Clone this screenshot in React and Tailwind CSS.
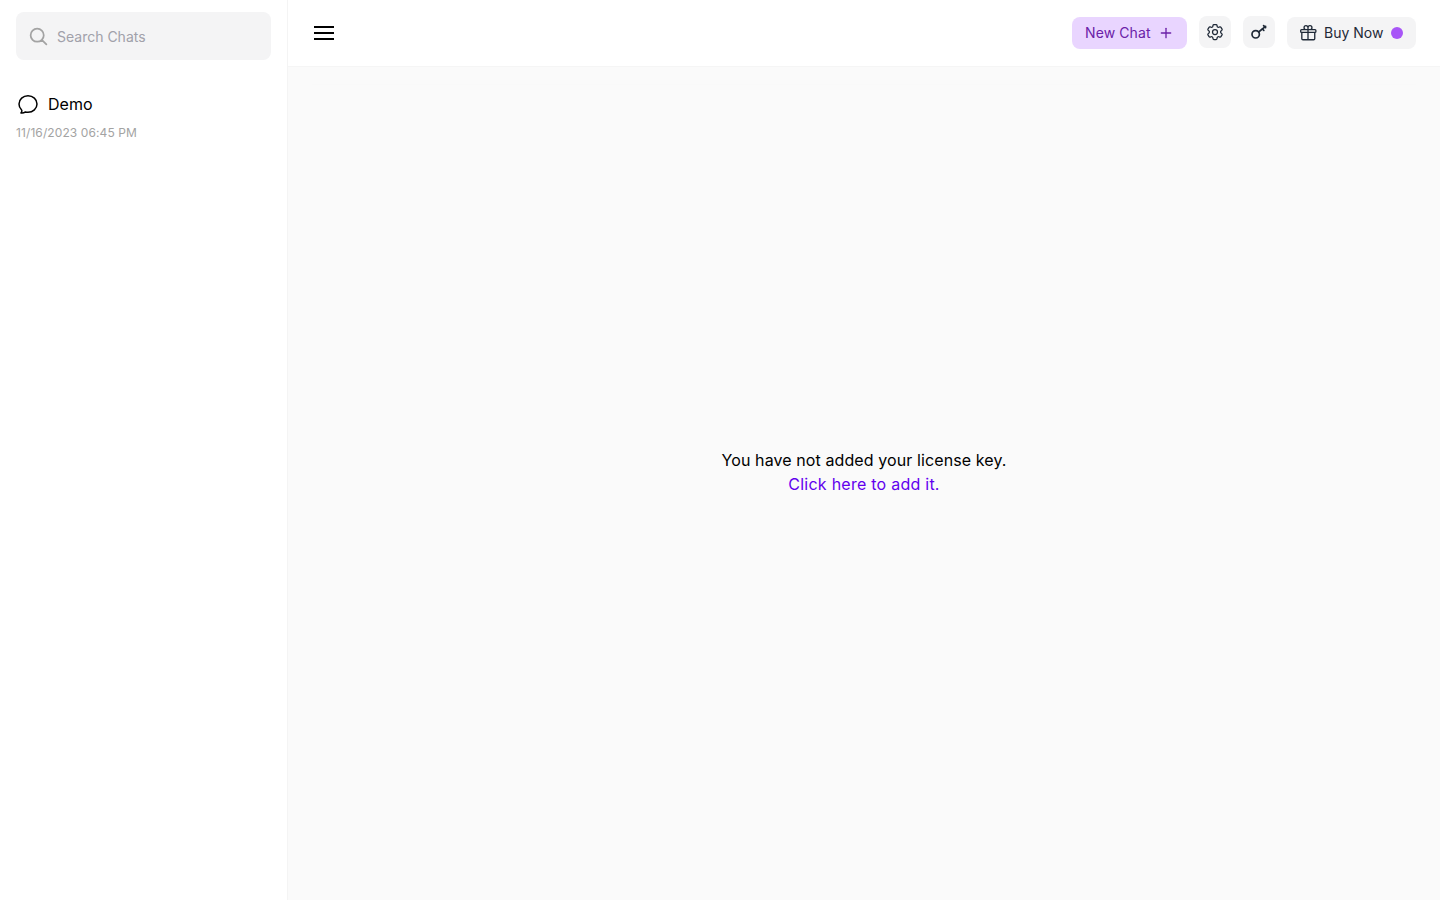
import React from 'react';
import { Plus } from 'lucide-react';

// heroicons-style outlines, the lucide versions have different strokes
const Outline = ({ size = 20, width = 1.5, className = '', children }) => (
  <svg width={size} height={size} viewBox="0 0 24 24" fill="none" stroke="currentColor" strokeWidth={width} strokeLinecap="round" strokeLinejoin="round" className={className}>
    {children}
  </svg>
);

const KeyIcon = () => (
  <svg width="18" height="18" viewBox="0 0 18 18" fill="none" stroke="currentColor" strokeWidth="1.7" strokeLinecap="round" strokeLinejoin="round">
    <circle cx="5.7" cy="11.3" r="3.7" />
    <path d="M8.6 9L15.6 3.4" />
    <path d="M12.4 6l1.4 1.3" />
    <path d="M13.6 2.6l2 2" />
  </svg>
);

const App = () => {
  return (
    <div className="flex h-screen w-full bg-white text-black font-['Inter',sans-serif]">
      {/* sidebar */}
      <aside className="w-[288px] shrink-0 border-r border-[#f4f4f4] px-4 pt-3">
        <div className="flex h-12 items-center rounded-lg bg-[#f4f4f5] pl-3 pr-3">
          <Outline size={21} width={2} className="text-[#a3a3a3] shrink-0">
            <path d="m21 21-5.197-5.197m0 0A7.5 7.5 0 1 0 5.196 5.196a7.5 7.5 0 0 0 10.607 10.607Z" />
          </Outline>
          <span className="ml-2 text-sm text-[#a1a1aa] pt-0.5">Search Chats</span>
        </div>
        <div className="mt-8">
          <div className="flex items-center h-6">
            <Outline size={24} className="shrink-0 mr-2 text-black">
              <path d="M12 20.25c4.97 0 9-3.694 9-8.25s-4.03-8.25-9-8.25S3 7.444 3 12c0 2.104.859 4.023 2.273 5.48.432.447.74 1.04.586 1.641a4.483 4.483 0 0 1-.923 1.785A5.969 5.969 0 0 0 6 21c1.282 0 2.47-.402 3.445-1.087.81.22 1.668.337 2.555.337Z" />
            </Outline>
            <span className="text-base">Demo</span>
          </div>
          <div className="mt-[9px] text-xs leading-4 tracking-[0.1px] text-[#a3a3a3]">11/16/2023 06:45 PM</div>
        </div>
      </aside>

      {/* main */}
      <main className="flex flex-1 flex-col bg-[#fafafa]">
        <header className="flex h-[67px] shrink-0 items-center border-b border-[#f5f5f5] bg-white px-6">
          <svg width="24" height="24" viewBox="0 0 24 24" fill="none" stroke="black" strokeWidth="2" className="shrink-0">
            <path d="M2 6h20M2 12h20M2 18h20" />
          </svg>
          <div className="ml-auto flex items-center">
            <div className="flex h-8 w-[115px] items-center rounded-lg bg-[#e9d5ff] pl-[13px] text-sm text-[#6b21a8] tracking-[0.1px]">
              New Chat
              <Plus size={16} strokeWidth={2} className="ml-[7px]" />
            </div>
            <div className="ml-3 mb-0.5 flex h-8 w-8 items-center justify-center rounded-lg bg-[#f4f4f5] text-[#1f2937]">
              <Outline size={20}>
                <path d="M9.594 3.94c.09-.542.56-.94 1.11-.94h2.593c.55 0 1.02.398 1.11.94l.213 1.281c.063.374.313.686.645.87.074.04.147.083.22.127.325.196.72.257 1.075.124l1.217-.456a1.125 1.125 0 0 1 1.37.49l1.296 2.247a1.125 1.125 0 0 1-.26 1.431l-1.003.827c-.293.241-.438.613-.43.992a7.723 7.723 0 0 1 0 .255c-.008.378.137.75.43.991l1.004.827c.424.35.534.955.26 1.43l-1.298 2.247a1.125 1.125 0 0 1-1.369.491l-1.217-.456c-.355-.133-.75-.072-1.076.124a6.47 6.47 0 0 1-.22.128c-.331.183-.581.495-.644.869l-.213 1.281c-.09.543-.56.94-1.11.94h-2.594c-.55 0-1.019-.398-1.11-.94l-.213-1.281c-.062-.374-.312-.686-.644-.87a6.52 6.52 0 0 1-.22-.127c-.325-.196-.72-.257-1.076-.124l-1.217.456a1.125 1.125 0 0 1-1.369-.49l-1.297-2.247a1.125 1.125 0 0 1 .26-1.431l1.004-.827c.292-.24.437-.613.43-.991a6.932 6.932 0 0 1 0-.255c.007-.38-.138-.751-.43-.992l-1.004-.827a1.125 1.125 0 0 1-.26-1.43l1.297-2.247a1.125 1.125 0 0 1 1.37-.491l1.216.456c.356.133.751.072 1.076-.124.072-.044.146-.086.22-.128.332-.183.582-.495.644-.869l.214-1.28Z" />
                <path d="M15 12a3 3 0 1 1-6 0 3 3 0 0 1 6 0Z" />
              </Outline>
            </div>
            <div className="ml-3 mb-0.5 flex h-8 w-8 items-center justify-center rounded-lg bg-[#f4f4f5] text-[#1f2937]">
              <KeyIcon />
            </div>
            <div className="ml-3 flex h-8 w-[129px] items-center rounded-lg bg-[#f4f4f5] pl-3 text-sm text-[#1f2937]">
              <Outline size={18} width={1.75} className="shrink-0">
                <path d="M21 11.25v8.25a1.5 1.5 0 0 1-1.5 1.5H5.25a1.5 1.5 0 0 1-1.5-1.5v-8.25M12 4.875A2.625 2.625 0 1 0 9.375 7.5H12m0-2.625V7.5m0-2.625A2.625 2.625 0 1 1 14.625 7.5H12m0 0V21m-8.625-9.75h18c.621 0 1.125-.504 1.125-1.125v-1.5c0-.621-.504-1.125-1.125-1.125h-18c-.621 0-1.125.504-1.125 1.125v1.5c0 .621.504 1.125 1.125 1.125Z" />
              </Outline>
              <span className="ml-[7px]">Buy Now</span>
              <span className="ml-2 h-3 w-3 rounded-full bg-[#a855f7]" />
            </div>
          </div>
        </header>
        {/* only the top edge of this panel shows, text is centred in it */}
        <div className="mx-6 mt-[17px] flex h-[775px] flex-col items-center justify-center border-t border-[#f9f9f9] text-base leading-6 tracking-[0.1px]">
          <div>You have not added your license key.</div>
          <div className="text-[#6200ee] tracking-[0.25px]">Click here to add it.</div>
        </div>
      </main>
    </div>
  );
};

export default App;
